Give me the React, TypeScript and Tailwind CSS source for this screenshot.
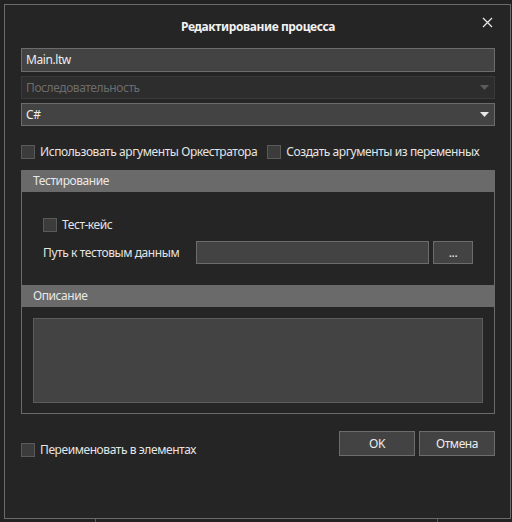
import React from "react";

function Checkbox({ label }: { label: string }) {
  return (
    <label className="flex items-center gap-[5px] whitespace-nowrap">
      <span className="h-[14px] w-[14px] shrink-0 border border-[#5a5a5a] bg-[#3c3c3c]" />
      <span className="text-[#e4e4e4]">{label}</span>
    </label>
  );
}

function Caret({ dim }: { dim?: boolean }) {
  return (
    <svg width="9" height="5" viewBox="0 0 9 5" className="shrink-0">
      <path d="M0 0h9L4.5 5z" fill={dim ? "#5c5c5c" : "#e8e8e8"} />
    </svg>
  );
}

export default function App() {
  return (
    <div
      className="h-[522px] w-[512px] overflow-hidden bg-[#222222] text-[12px] leading-none tracking-[-0.42px]"
      style={{ fontFamily: '"Noto Sans", "Open Sans", sans-serif' }}
    >
      <div className="ml-[4px] mt-[4px] flex h-[515px] w-[507px] flex-col border border-[#6a6a6a] bg-[#252525] pl-[16px] pr-[15px]">
        {/* title */}
        <div className="relative flex h-[43px] items-center justify-center">
          <span className="text-[12px] font-bold tracking-[-0.4px] text-[#f2f2f2]">Редактирование процесса</span>
          <button className="absolute right-[1px] top-[10px] flex h-[14px] w-[14px] items-center justify-center">
            <svg width="11" height="11" viewBox="0 0 11 11">
              <path d="M1 1l9 9M10 1l-9 9" stroke="#e6e6e6" strokeWidth="1.3" />
            </svg>
          </button>
        </div>

        {/* fields */}
        <div className="flex h-[24px] items-center border border-[#6c6c6c] bg-[#434343] px-[4px] text-[#ececec]">
          Main.ltw
        </div>
        <div className="mt-[4px] flex h-[23px] items-center justify-between border border-[#3a3a3a] bg-[#2d2d2d] pl-[4px] pr-[5px] text-[#6c6c6c]">
          <span>Последовательность</span>
          <Caret dim />
        </div>
        <div className="mt-[4px] flex h-[23px] items-center justify-between border border-[#6c6c6c] bg-[#434343] pl-[4px] pr-[5px] text-[#ececec]">
          <span>C#</span>
          <Caret />
        </div>

        {/* options */}
        <div className="mt-[19px] flex items-center gap-[10px]">
          <Checkbox label="Использовать аргументы Оркестратора" />
          <Checkbox label="Создать аргументы из переменных" />
        </div>

        {/* groups */}
        <div className="mt-[11px] flex flex-col border border-t-0 border-[#6a6a6a]">
          <div className="-mx-px flex h-[22px] items-center bg-[#6a6a6a] pl-[12px] text-[#e8e8e8]">
            Тестирование
          </div>
          <div className="flex flex-col pl-[21px] pr-[21px] pt-[26px]">
            <Checkbox label="Тест-кейс" />
            <div className="mt-[9px] flex items-center">
              <span className="w-[153px] text-[#e4e4e4]">Путь к тестовым данным</span>
              <div className="h-[23px] w-[233px] border border-[#6c6c6c] bg-[#434343]" />
              <button className="ml-[4px] flex h-[23px] w-[40px] items-center justify-center border border-[#6c6c6c] bg-[#434343] text-[#e8e8e8]">
                ...
              </button>
            </div>
          </div>
          <div className="-mx-px mt-[21px] flex h-[22px] items-center bg-[#6a6a6a] pl-[12px] text-[#e8e8e8]">
            Описание
          </div>
          <div className="px-[11px] pb-[10px] pt-[11px]">
            <div className="h-[85px] border border-[#5c5c5c] bg-[#434343]" />
          </div>
        </div>

        {/* footer */}
        <div className="mt-[17px] flex items-start justify-between">
          <div className="mt-[12px]">
            <Checkbox label="Переименовать в элементах" />
          </div>
          <div className="flex gap-[4px]">
            <button className="flex h-[25px] w-[76px] items-center justify-center border border-[#6c6c6c] bg-[#434343] text-[#ececec]">
              OK
            </button>
            <button className="flex h-[25px] w-[76px] items-center justify-center border border-[#6c6c6c] bg-[#434343] text-[#ececec]">
              Отмена
            </button>
          </div>
        </div>
      </div>
      <div className="relative h-[3px]">
        <div className="absolute left-[95px] top-0 h-[3px] w-px bg-[#5a5a5a]" />
        <div className="absolute left-[437px] top-0 h-[3px] w-px bg-[#5a5a5a]" />
      </div>
    </div>
  );
}
